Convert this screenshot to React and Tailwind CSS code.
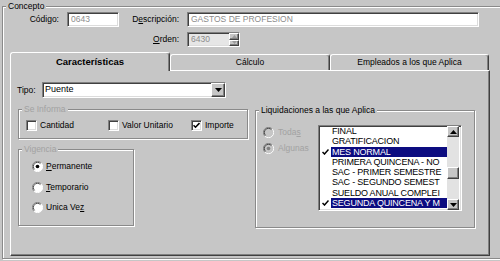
import React from "react";

const BG = "bg-[#c6c6c6]";
const sunken =
  "border border-t-[#808080] border-l-[#808080] border-r-white border-b-white shadow-[inset_1px_1px_0_#404040,inset_-1px_-1px_0_#dcdcdc]";
const raised =
  "bg-[#c6c6c6] border border-t-white border-l-white border-r-[#404040] border-b-[#404040] shadow-[inset_-1px_-1px_0_#808080]";
const etched =
  "border border-[#8a8a8a] shadow-[inset_1px_1px_0_#fff,1px_1px_0_#fff]";

function Group({ label, disabled, className, children }) {
  return (
    <div className={`relative ${etched} ${className}`}>
      <span
        className={`absolute -top-[7px] left-[3px] px-[2px] leading-[12px] ${BG} ${
          disabled ? "text-[#a2a2a2]" : "text-black"
        }`}
      >
        {label}
      </span>
      {children}
    </div>
  );
}

function Check({ checked }) {
  return (
    <div className={`w-[11px] h-[11px] bg-white ${sunken} flex items-center justify-center shrink-0`}>
      {checked && (
        <svg width="7" height="7" viewBox="0 0 7 7">
          <path d="M0.5 3.2 L2.5 5.2 L6.5 1" stroke="#000" strokeWidth="1.6" fill="none" />
        </svg>
      )}
    </div>
  );
}

function Radio({ checked, disabled }) {
  return (
    <svg width="11" height="11" viewBox="0 0 12 12" className="shrink-0">
      <circle cx="6" cy="6" r="5.5" fill={disabled ? "#c6c6c6" : "#fff"} />
      <path d="M10 2 A5.5 5.5 0 0 0 2 10" stroke="#808080" strokeWidth="1" fill="none" />
      <path d="M9.2 2.8 A4.5 4.5 0 0 0 2.8 9.2" stroke="#404040" strokeWidth="1" fill="none" />
      <path d="M2 10 A5.5 5.5 0 0 0 10 2" stroke="#fff" strokeWidth="1" fill="none" />
      {checked && <circle cx="6" cy="6" r="2" fill={disabled ? "#808080" : "#000"} />}
    </svg>
  );
}

function Tri({ down, color = "#000" }) {
  return (
    <svg width="7" height="4" viewBox="0 0 7 4">
      {down ? <path d="M0 0 H7 L3.5 4 Z" fill={color} /> : <path d="M0 4 H7 L3.5 0 Z" fill={color} />}
    </svg>
  );
}

const items = [
  ["FINAL", false],
  ["GRATIFICACION", false],
  ["MES NORMAL", true],
  ["PRIMERA QUINCENA - NO", false],
  ["SAC - PRIMER SEMESTRE", false],
  ["SAC - SEGUNDO SEMEST", false],
  ["SUELDO ANUAL COMPLEI", false],
  ["SEGUNDA QUINCENA Y M", true],
];

export default function App() {
  return (
    <div
      className={`w-[500px] h-[261px] overflow-hidden ${BG} pt-[6px] pl-[2px] text-[8.5px] text-black font-['Liberation_Sans',Arial,sans-serif]`}
    >
      <Group label="Concepto" className="w-[500px] h-[253px]">
        {/* Row 1 */}
        <div className="mt-[5px] flex items-center h-[15px]">
          <div className="w-[56px] text-right">Código:</div>
          <div className={`ml-[8px] w-[52px] h-[15px] bg-white ${sunken} flex items-center pl-[3px] text-[#8c8c8c]`}>
            0643
          </div>
          <div className="w-[60px] text-right">
            D<u>e</u>scripción:
          </div>
          <div className={`ml-[8px] w-[292px] h-[15px] bg-white ${sunken} flex items-center pl-[3px] text-[#8c8c8c]`}>
            GASTOS DE PROFESION
          </div>
        </div>
        {/* Row 2 */}
        <div className="mt-[5px] flex items-center h-[15px]">
          <div className="w-[176px] text-right">
            <u>O</u>rden:
          </div>
          <div className={`ml-[8px] w-[53px] h-[15px] bg-[#e6e6e6] ${sunken} flex items-center`}>
            <div className="flex-1 pl-[3px] text-[#8c8c8c]">6430</div>
            <div className="w-[10px] h-full flex flex-col">
              <div className={`flex-1 ${raised} flex items-center justify-center`}>
                <svg width="5" height="3" viewBox="0 0 5 3"><path d="M0 3 H5 L2.5 0 Z" fill="#9a9a9a" /></svg>
              </div>
              <div className={`flex-1 ${raised} flex items-center justify-center`}>
                <svg width="5" height="3" viewBox="0 0 5 3"><path d="M0 0 H5 L2.5 3 Z" fill="#9a9a9a" /></svg>
              </div>
            </div>
          </div>
        </div>
        {/* Tabs */}
        <div className="mt-[5px] ml-[7px] flex items-end h-[18px]">
          <div
            className={`relative z-10 -mb-px w-[160px] h-[19px] ${BG} border-t border-l border-r border-t-white border-l-white border-r-[#404040] rounded-t-[3px] shadow-[inset_-1px_0_0_#808080] flex items-center justify-center font-bold text-[9.5px]`}
          >
            Características
          </div>
          <div
            className={`w-[160px] h-[16px] ${BG} border-t border-l border-r border-t-white border-l-white border-r-[#404040] rounded-t-[3px] shadow-[inset_-1px_0_0_#808080] flex items-center justify-center`}
          >
            Cálculo
          </div>
          <div
            className={`w-[159px] h-[16px] ${BG} border-t border-l border-r border-t-white border-l-white border-r-[#404040] rounded-t-[3px] shadow-[inset_-1px_0_0_#808080] flex items-center justify-center`}
          >
            Empleados a los que Aplica
          </div>
        </div>
        {/* Panel */}
        <div
          className={`ml-[7px] w-[480px] h-[186px] ${BG} border border-l-white border-t-white border-r-[#404040] border-b-[#404040] shadow-[inset_-1px_-1px_0_#808080]`}
        >
          <div className="mt-[11px] pl-[6px] flex items-center h-[16px]">
            <div className="w-[25px]">Tipo:</div>
            <div className={`w-[184px] h-[16px] bg-white ${sunken} flex items-center`}>
              <div className="flex-1 pl-[2px] text-[9px]">Puente</div>
              <div className={`w-[14px] h-full ${raised} flex items-center justify-center`}>
                <Tri down />
              </div>
            </div>
          </div>
          <div className="mt-[11px] pl-[7px] flex gap-[7px]">
            <div className="w-[230px] flex flex-col gap-[10px]">
              <Group label="Se Informa" disabled className="w-[230px] h-[30px]">
                <div className="pt-[9px] pl-[7px] flex items-center">
                  <div className="w-[82px] flex items-center gap-[3px]">
                    <Check />
                    <span>Cantidad</span>
                  </div>
                  <div className="w-[83px] flex items-center gap-[3px]">
                    <Check />
                    <span>Valor Unitario</span>
                  </div>
                  <div className="flex items-center gap-[3px]">
                    <Check checked />
                    <span>Importe</span>
                  </div>
                </div>
              </Group>
              <Group label="Vigencia" disabled className="w-[116px] h-[77px]">
                <div className="pt-[11px] pl-[13px] flex flex-col gap-[9.5px]">
                  <div className="flex items-center gap-[3px] h-[11px]">
                    <Radio checked />
                    <span>
                      <u>P</u>ermanente
                    </span>
                  </div>
                  <div className="flex items-center gap-[3px] h-[11px]">
                    <Radio />
                    <span>
                      <u>T</u>emporario
                    </span>
                  </div>
                  <div className="flex items-center gap-[3px] h-[11px]">
                    <Radio />
                    <span>
                      Unica Ve<u>z</u>
                    </span>
                  </div>
                </div>
              </Group>
            </div>
            <Group label="Liquidaciones a las que Aplica" className="mt-[1px] w-[220px] h-[118px]">
              <div className="pt-[14px] pl-[7px] flex">
                <div className="w-[55px] pt-[2px] flex flex-col gap-[5px] text-[#a2a2a2]">
                  <div className="flex items-center gap-[4px] h-[11px]">
                    <Radio disabled />
                    <span>
                      Toda<u>s</u>
                    </span>
                  </div>
                  <div className="flex items-center gap-[4px] h-[11px]">
                    <Radio disabled checked />
                    <span>Algunas</span>
                  </div>
                </div>
                <div className={`w-[144px] h-[86px] bg-white ${sunken} flex`}>
                  <div className="w-[128px] flex flex-col">
                    {items.map(([t, sel]) => (
                      <div key={t} className="flex items-center h-[10.25px]">
                        <div className="w-[12px] flex items-center justify-center">
                          {sel && (
                            <svg width="7" height="6" viewBox="0 0 7 6">
                              <path d="M0.5 3 L2.5 5 L6.5 0.5" stroke="#000" strokeWidth="1.5" fill="none" />
                            </svg>
                          )}
                        </div>
                        <div
                          className={`w-[116px] h-full whitespace-nowrap overflow-hidden leading-[10.25px] text-[9px] tracking-[-0.2px] pl-[1px] ${
                            sel ? "bg-[#0c0c80] text-white" : "text-black"
                          }`}
                        >
                          {t}
                        </div>
                      </div>
                    ))}
                  </div>
                  <div className="w-[12px] flex flex-col bg-[#e2e2e2]">
                    <div className={`h-[11px] ${raised} flex items-center justify-center`}>
                      <Tri />
                    </div>
                    <div className="flex-1">
                      <div className={`mt-[30px] h-[12px] ${raised}`} />
                    </div>
                    <div className={`h-[11px] ${raised} flex items-center justify-center`}>
                      <Tri down />
                    </div>
                  </div>
                </div>
              </div>
            </Group>
          </div>
        </div>
      </Group>
    </div>
  );
}
